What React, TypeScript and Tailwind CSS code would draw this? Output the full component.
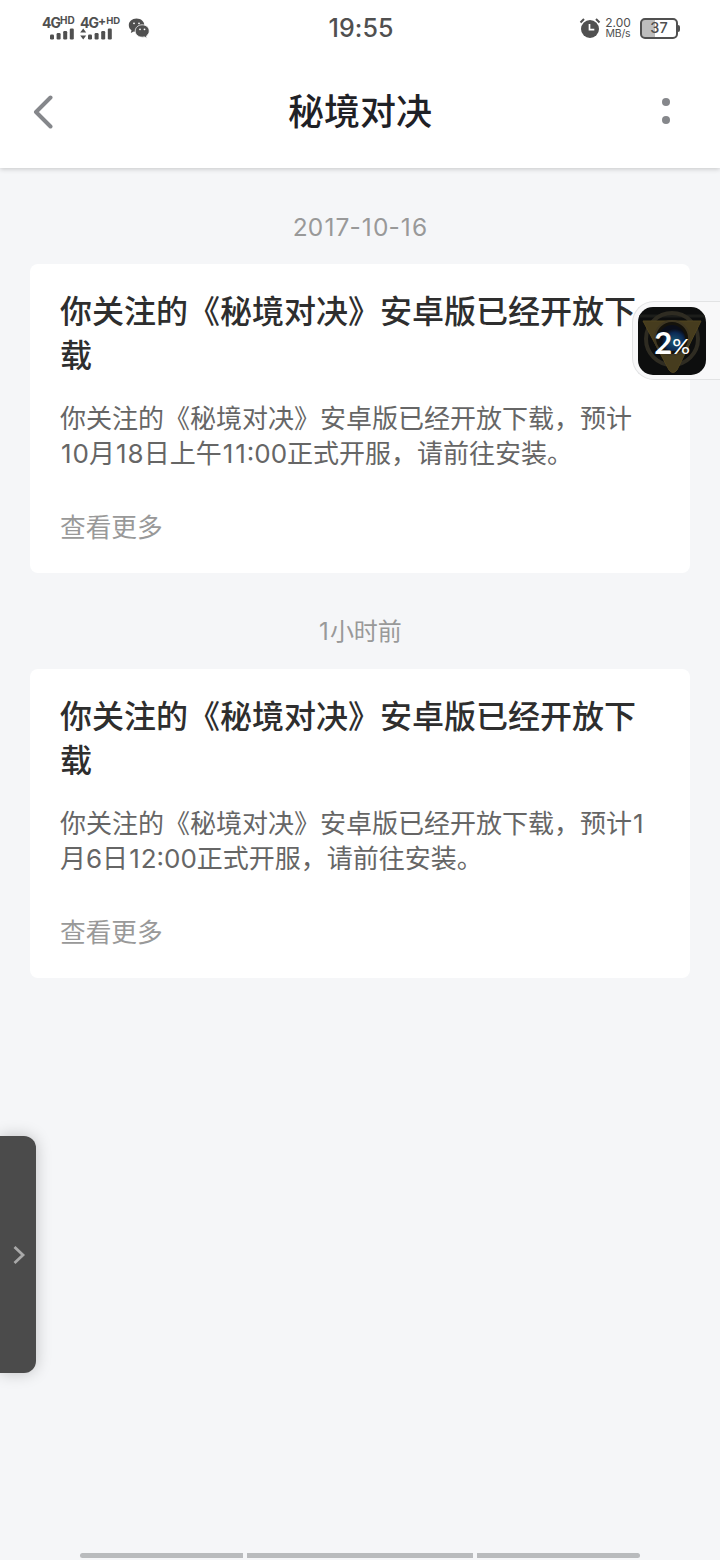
const notices = [
  {
    date: '2017-10-16',
    dateClass: 'text-[24.500px] tracking-[0.1px]',
    body: ['你关注的《秘境对决》安卓版已经开放下载，预计', '10月18日上午11:00正式开服，请前往安装。'],
  },
  {
    date: '1小时前',
    dateClass: 'text-[24px]',
    body: ['你关注的《秘境对决》安卓版已经开放下载，预计1', '月6日12:00正式开服，请前往安装。'],
  },
];

// The digit 1 gets a little side bearing so numbers keep an even rhythm
function Numerals({ text }: { text: string }) {
  return (
    <>
      {text.split(/(1)/).map((part, i) =>
        part === '1' ? (
          <span key={i} className="px-px">
            1
          </span>
        ) : (
          part
        ),
      )}
    </>
  );
}

function SignalBars() {
  return (
    <svg width="24" height="12" viewBox="0 0 24 12" fill="#505050">
      <rect x="0" y="6.5" width="4" height="5" rx="1.2" />
      <rect x="6.6" y="5" width="4" height="6.5" rx="1.2" />
      <rect x="13.2" y="3" width="4" height="8.5" rx="1.2" />
      <rect x="19.8" y="0.5" width="4" height="11" rx="1.2" />
    </svg>
  );
}

function ChatIcon() {
  return (
    <svg width="22" height="22" viewBox="0 0 22 22" fill="#505050">
      <path d="M8.500 1.500C4 1.500.8 4.500.8 8.200c0 2.200 1 3.900 2.700 5.100L2.800 16l3-1.400c.9.200 1.800.4 2.700.4 4.500 0 7.800-3 7.800-6.800S13 1.500 8.500 1.500Z" />
      <path d="M14.200 7.800c-4 0-7 2.800-7 6.200s3 6.200 7 6.200c.8 0 1.600-.1 2.300-.3l2.600 1.300-.6-2.300c1.600-1.100 2.700-2.800 2.700-4.900 0-3.400-3-6.200-7-6.200Z" stroke="#fff" strokeWidth="0.8" />
      <circle cx="6" cy="6.300" r="0.9" fill="#fff" />
      <circle cx="11" cy="6.300" r="0.9" fill="#fff" />
      <circle cx="12" cy="12.300" r="0.9" fill="#fff" />
      <circle cx="16.500" cy="12.300" r="0.9" fill="#fff" />
    </svg>
  );
}

function StatusBar() {
  return (
    <div className="grid h-14 grid-cols-3 items-center pr-10 pl-[42px] font-['Inter','Noto_Sans_CJK_SC',sans-serif] text-[#505050]">
      <div className="flex items-center">
        <div className="flex w-[38px] flex-col">
          <div className="flex h-3 items-start text-[14px] leading-[13px] font-bold tracking-[-1px]">
            4G<span className="text-[10px] leading-[9px] tracking-[0.1px]">HD</span>
          </div>
          <div className="ml-2 h-3">
            <SignalBars />
          </div>
        </div>
        <div className="flex w-[48px] flex-col">
          <div className="flex h-3 items-start text-[14px] leading-[13px] font-bold tracking-[-1px]">
            4G<span className="text-[12px] leading-[10px]">+</span>
            <span className="ml-px text-[9.500px] leading-[9px] tracking-[0px]">HD</span>
          </div>
          <div className="flex h-3">
            <svg width="8" height="12" viewBox="0 0 8 12" fill="#505050">
              <path d="M3.200.5 6.200 4.500H.2ZM3.200 11.500.2 7.500h6Z" />
            </svg>
            <SignalBars />
          </div>
        </div>
        <ChatIcon />
      </div>
      <div className="text-center text-[25px] leading-7 font-medium tracking-[0.1px]">19:55</div>
      <div className="flex items-center justify-end">
        <svg width="22" height="22" viewBox="0 0 22 22">
          <circle cx="11" cy="12" r="9" fill="#505050" />
          <path d="M1.500 5.500 5 2M20.500 5.500 17 2" stroke="#505050" strokeWidth="2" />
          <path d="M10.500 7v5.700h4.800" fill="none" stroke="#fff" strokeWidth="1.7" />
        </svg>
        <div className="ml-[3px] w-[28px] text-center text-[12px] leading-[11px]">
          <div>2.00</div>
          <div className="text-[10.500px] tracking-[-0.2px]">MB/s</div>
        </div>
        <div className="ml-2 flex items-center">
          <div className="flex h-[21px] w-[38px] items-center justify-center rounded-[5px] border-2 border-[#505050] bg-[linear-gradient(90deg,#bdbdbd_38%,#fff_38%)] pt-px text-[14.500px] leading-none font-medium">
            37
          </div>
          <div className="h-[7px] w-0.5 rounded-r-sm bg-[#505050]" />
        </div>
      </div>
    </div>
  );
}

function TitleBar() {
  return (
    <div className="grid h-28 grid-cols-[1fr_auto_1fr] items-center pr-[44px] pl-[33px]">
      <svg width="20" height="34" viewBox="0 0 20 34" fill="none">
        <path d="M17.500 2.500 3 17l14.500 14.500" stroke="#85878b" strokeWidth="4" strokeLinecap="round" strokeLinejoin="round" />
      </svg>
      <h1 className="ml-[11px] text-[36px] leading-[50px] font-medium text-[#1f2126]">秘境对决</h1>
      <div className="-mt-0.5 flex w-5 flex-col items-center gap-2.5 justify-self-end">
        <span className="size-2 rounded-full bg-[#85878b]" />
        <span className="size-2 rounded-full bg-[#85878b]" />
      </div>
    </div>
  );
}

function NoticeCard({ body }: { body: string[] }) {
  return (
    <div className="h-[309px] rounded-lg bg-white px-[30px] pt-[26px]">
      <h2 className="text-[32px] leading-11 font-medium text-[#2e2e2e]">你关注的《秘境对决》安卓版已经开放下载</h2>
      <div className="mt-[23px] text-[26px] leading-[35px] whitespace-nowrap text-[#666]">
        {body.map((line) => (
          <p key={line}>
            <Numerals text={line} />
          </p>
        ))}
      </div>
      <div className="mt-[38px] text-[25.700px] leading-[38px] text-[#999]">查看更多</div>
    </div>
  );
}

function DownloadBubble() {
  return (
    <div className="absolute top-[301px] right-0 h-[79px] w-[88px] rounded-l-[22px] border border-r-0 border-[#e2e3e4] bg-[#f8f8f9] pt-[5px] pl-[5px]">
      <div className="relative size-[68px] overflow-hidden rounded-[15px] bg-[#0d0e0e]">
        <svg width="68" height="68" viewBox="0 0 68 68" fill="none">
          <defs>
            <radialGradient id="gem" cx="0.6" cy="0.65">
              <stop offset="0" stopColor="#1a5a72" />
              <stop offset="0.7" stopColor="#0b2a55" />
              <stop offset="1" stopColor="#0a0e1a" />
            </radialGradient>
          </defs>
          <path d="M0 9h68" stroke="#1c1d1a" strokeWidth="3" />
          <circle cx="34" cy="32" r="26" stroke="#2f2c22" strokeWidth="4" />
          <path d="M5 14h58L39 63q-4 5-8 0Z" fill="#463c1e" stroke="#50441f" />
          <circle cx="34" cy="31" r="17" fill="#14120b" stroke="#3f3722" strokeWidth="2" />
          <circle cx="34" cy="31" r="13" fill="url(#gem)" />
        </svg>
        <div className="absolute inset-0 flex items-baseline justify-center pt-[17px] font-['Lato',sans-serif] text-[31px] leading-9 font-bold text-white">
          2<span className="text-[22px] font-medium">%</span>
        </div>
      </div>
    </div>
  );
}

function SideHandle() {
  return (
    <div className="absolute top-[1136px] left-0 flex h-[237px] w-9 items-center justify-end rounded-r-xl bg-[#4b4b4b] pr-2.5 shadow-[0_0_16px_rgba(0,0,0,0.22)]">
      <svg width="14" height="20" viewBox="0 0 14 20" fill="none">
        <path d="m2.500 2 8.500 8-8.500 8" stroke="#a9a9a9" strokeWidth="2.8" />
      </svg>
    </div>
  );
}

export default function App() {
  return (
    <div className="relative flex h-[1560px] w-[720px] flex-col overflow-hidden bg-[#f5f6f8] font-['Inter','Noto_Sans_CJK_SC',sans-serif]">
      <header className="h-[168px] shrink-0 bg-white shadow-[0_1px_5px_rgba(0,0,0,0.2)]">
        <StatusBar />
        <TitleBar />
      </header>
      <main className="flex-1 px-[30px]">
        {notices.map((notice) => (
          <section key={notice.date}>
            <div className="flex h-24 items-center justify-center pt-[22px] text-[#999]">
              <span className={notice.dateClass}>
                <Numerals text={notice.date} />
              </span>
            </div>
            <NoticeCard body={notice.body} />
          </section>
        ))}
      </main>
      <footer className="flex gap-1 px-20 pb-0.5">
        <div className="h-[5px] w-[163px] rounded-l-full bg-[#b9bbbd]" />
        <div className="h-[5px] flex-1 bg-[#b9bbbd]" />
        <div className="h-[5px] w-[163px] rounded-r-full bg-[#b9bbbd]" />
      </footer>
      <DownloadBubble />
      <SideHandle />
    </div>
  );
}
